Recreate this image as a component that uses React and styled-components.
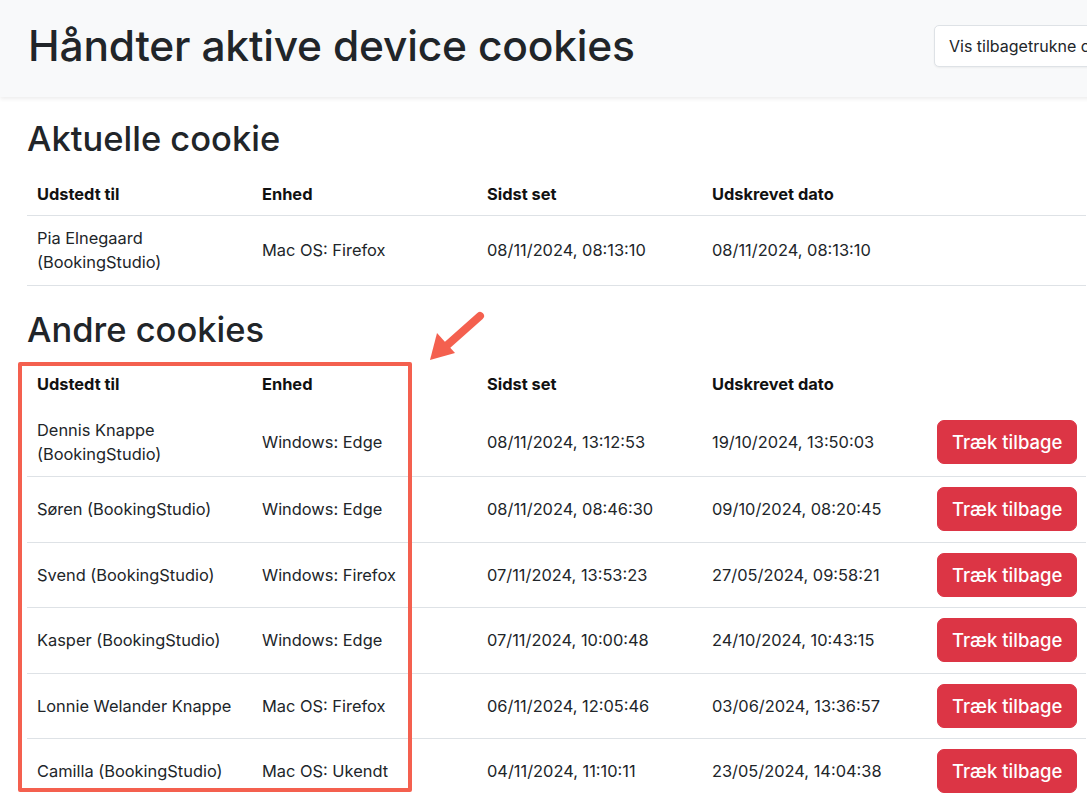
import React from "react";
import styled, { createGlobalStyle } from "styled-components";

const GlobalStyle = createGlobalStyle`
  html, body {
    margin: 0;
    padding: 0;
    background: #fff;
    overflow: hidden;
  }
  body {
    font-family: Inter, "Noto Sans", "Liberation Sans", sans-serif;
    font-size: 16.4px;
    line-height: 24px;
    color: #212529;
  }
`;

const Page = styled.div`
  position: relative;
  width: 1200px;
  min-height: 800px;
`;

const Header = styled.header`
  display: grid;
  grid-template-columns: 906px auto;
  align-items: center;
  height: 91px;
  padding: 0 0 6px 28px;
  background: #f8f9fa;
  box-shadow: 0 2px 4px rgba(0, 0, 0, 0.075);
`;

const Title = styled.h1`
  margin: 0;
  font-size: 42.5px;
  font-weight: 500;
  line-height: 50px;
  letter-spacing: -0.2px;
  color: #212529;
`;

const OutlineButton = styled.button`
  font-family: inherit;
  font-size: 16px;
  line-height: 24px;
  padding: 8px 14px;
  height: 42px;
  white-space: nowrap;
  color: #212529;
  background: #fff;
  border: 1px solid #dee2e6;
  border-radius: 5px;
  box-shadow: 0 1px 2px rgba(0, 0, 0, 0.05);
`;

const Content = styled.main`
  padding-left: 27px;
`;

const SectionTitle = styled.h2`
  margin: ${({ $first }) => ($first ? "22px 0 14px" : "24px 0 13px")};
  font-size: 34.5px;
  font-weight: 500;
  line-height: 40px;
  color: #212529;
`;

const Table = styled.table`
  width: 1059px;
  border-collapse: collapse;
  table-layout: fixed;
`;

const HeadRow = styled.tr`
  border-bottom: 1px solid ${({ $lined }) => ($lined ? "#dee2e6" : "transparent")};
`;

const Th = styled.th`
  box-sizing: border-box;
  text-align: left;
  font-weight: 700;
  padding: ${({ $tall }) => ($tall ? "9px 10px 11px" : "9px 10px")};
  width: ${({ $w }) => $w || "auto"};
  color: #111;
`;

const Row = styled.tr`
  border-bottom: 1px solid #dee2e6;
`;

const Td = styled.td`
  padding: 10.25px 10px;
  vertical-align: middle;
  color: #212529;
`;

const DangerButton = styled.button`
  font-family: inherit;
  font-size: 18.5px;
  line-height: 28px;
  font-weight: 500;
  height: 44px;
  padding: 7px 14px;
  color: #fff;
  background: #dc3545;
  border: 1px solid #dc3545;
  border-radius: 7px;
  white-space: nowrap;
  display: block;
`;

const Highlight = styled.div`
  position: absolute;
  left: 18px;
  top: 362px;
  width: 386px;
  height: 422px;
  border: 4px solid #f4604f;
  border-radius: 2px;
  pointer-events: none;
`;

const Arrow = styled.svg`
  position: absolute;
  left: 420px;
  top: 305px;
  width: 70px;
  height: 62px;
  pointer-events: none;
`;

const current = {
  name: ["Pia Elnegaard", "(BookingStudio)"],
  device: "Mac OS: Firefox",
  seen: "08/11/2024, 08:13:10",
  issued: "08/11/2024, 08:13:10",
};

const others = [
  { name: ["Dennis Knappe", "(BookingStudio)"], device: "Windows: Edge", seen: "08/11/2024, 13:12:53", issued: "19/10/2024, 13:50:03" },
  { name: ["Søren (BookingStudio)"], device: "Windows: Edge", seen: "08/11/2024, 08:46:30", issued: "09/10/2024, 08:20:45" },
  { name: ["Svend (BookingStudio)"], device: "Windows: Firefox", seen: "07/11/2024, 13:53:23", issued: "27/05/2024, 09:58:21" },
  { name: ["Kasper (BookingStudio)"], device: "Windows: Edge", seen: "07/11/2024, 10:00:48", issued: "24/10/2024, 10:43:15" },
  { name: ["Lonnie Welander Knappe"], device: "Mac OS: Firefox", seen: "06/11/2024, 12:05:46", issued: "03/06/2024, 13:36:57" },
  { name: ["Camilla (BookingStudio)"], device: "Mac OS: Ukendt", seen: "04/11/2024, 11:10:11", issued: "23/05/2024, 14:04:38" },
];

const Head = ({ lined }) => (
  <thead>
    <HeadRow $lined={lined}>
      <Th $w="225px" $tall={!lined}>Udstedt til</Th>
      <Th $w="225px" $tall={!lined}>Enhed</Th>
      <Th $w="225px" $tall={!lined}>Sidst set</Th>
      <Th $w="225px" $tall={!lined}>Udskrevet dato</Th>
      <Th $tall={!lined} />
    </HeadRow>
  </thead>
);

const Name = ({ lines }) =>
  lines.map((l, i) => (
    <React.Fragment key={i}>
      {i > 0 && <br />}
      {l}
    </React.Fragment>
  ));

export default function App() {
  return (
    <Page>
      <GlobalStyle />
      <Header>
        <Title>Håndter aktive device cookies</Title>
        <div>
          <OutlineButton>Vis tilbagetrukne cookies</OutlineButton>
        </div>
      </Header>

      <Content>
        <SectionTitle $first>Aktuelle cookie</SectionTitle>
        <Table>
          <Head lined />
          <tbody>
            <Row>
              <Td><Name lines={current.name} /></Td>
              <Td>{current.device}</Td>
              <Td>{current.seen}</Td>
              <Td>{current.issued}</Td>
              <Td />
            </Row>
          </tbody>
        </Table>

        <SectionTitle>Andre cookies</SectionTitle>
        <Table>
          <Head />
          <tbody>
            {others.map((c, i) => (
              <Row key={i}>
                <Td><Name lines={c.name} /></Td>
                <Td>{c.device}</Td>
                <Td>{c.seen}</Td>
                <Td>{c.issued}</Td>
                <Td><DangerButton>Træk tilbage</DangerButton></Td>
              </Row>
            ))}
          </tbody>
        </Table>
      </Content>

      <Highlight />
      <Arrow viewBox="0 0 70 62">
        <line x1="60" y1="11" x2="24" y2="43" stroke="#f4604f" strokeWidth="8" strokeLinecap="round" />
        <polygon points="10,55 17,28 35,48" fill="#f4604f" />
      </Arrow>
    </Page>
  );
}
